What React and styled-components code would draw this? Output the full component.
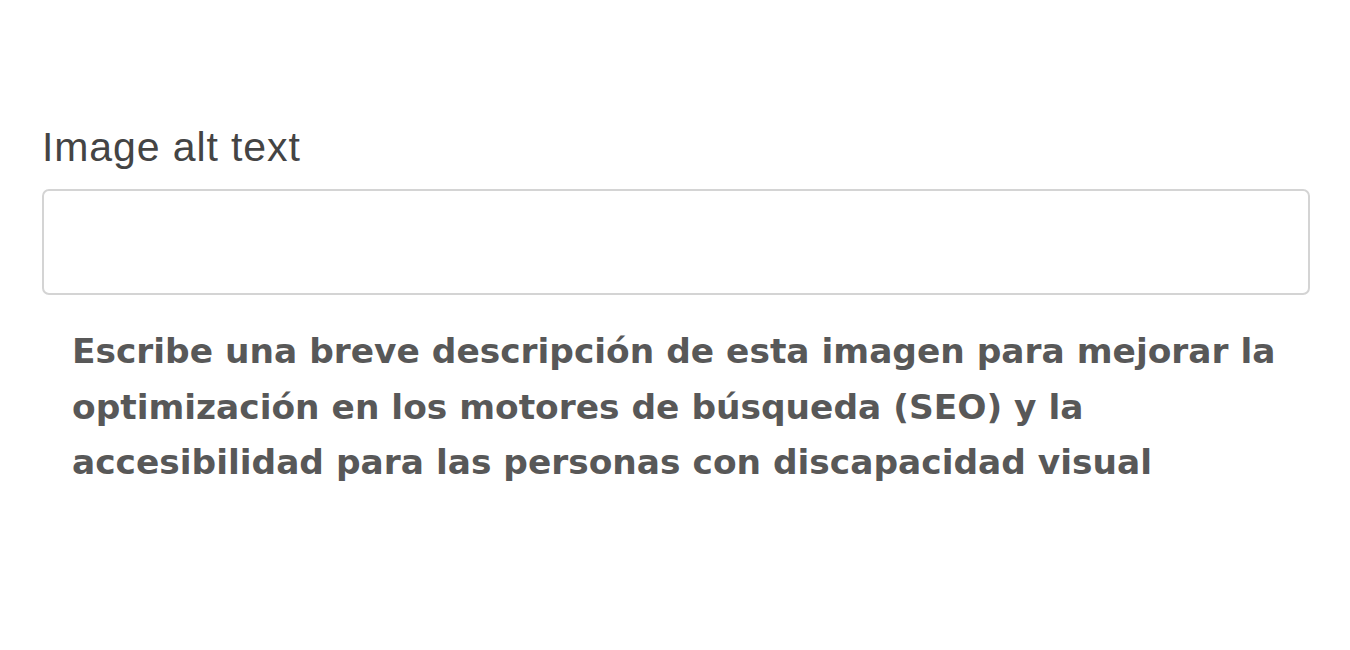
import React from 'react';
import styled, { createGlobalStyle } from 'styled-components';

const GlobalStyle = createGlobalStyle`
  html, body {
    margin: 0;
    padding: 0;
    background: #fff;
  }
`;

const Page = styled.div`
  width: 1350px;
  height: 650px;
  box-sizing: border-box;
  padding: 123px 40px 0 42px;
`;

const Field = styled.div`
  display: flex;
  flex-direction: column;
`;

const Label = styled.label`
  font-family: "Liberation Sans", Arial, sans-serif;
  font-size: 41px;
  letter-spacing: 0.9px;
  line-height: 48px;
  color: #444;
  margin-bottom: 18px;
`;

const Input = styled.input`
  box-sizing: border-box;
  width: 1268px;
  height: 106px;
  border: 2px solid #d4d4d4;
  border-radius: 7px;
  background: #fff;
  outline: none;
`;

const Hint = styled.p`
  margin: 29px 0 0 30px;
  font-family: "DejaVu Sans", Verdana, sans-serif;
  font-weight: 700;
  font-size: 34.4px;
  line-height: 55.5px;
  color: #585858;
  white-space: nowrap;
`;

const App = () => (
  <Page>
    <GlobalStyle />
    <Field>
      <Label htmlFor="alt">Image alt text</Label>
      <Input id="alt" type="text" />
      <Hint>
        Escribe una breve descripción de esta imagen para mejorar la<br />
        optimización en los motores de búsqueda (SEO) y la<br />
        accesibilidad para las personas con discapacidad visual
      </Hint>
    </Field>
  </Page>
);

export default App;
